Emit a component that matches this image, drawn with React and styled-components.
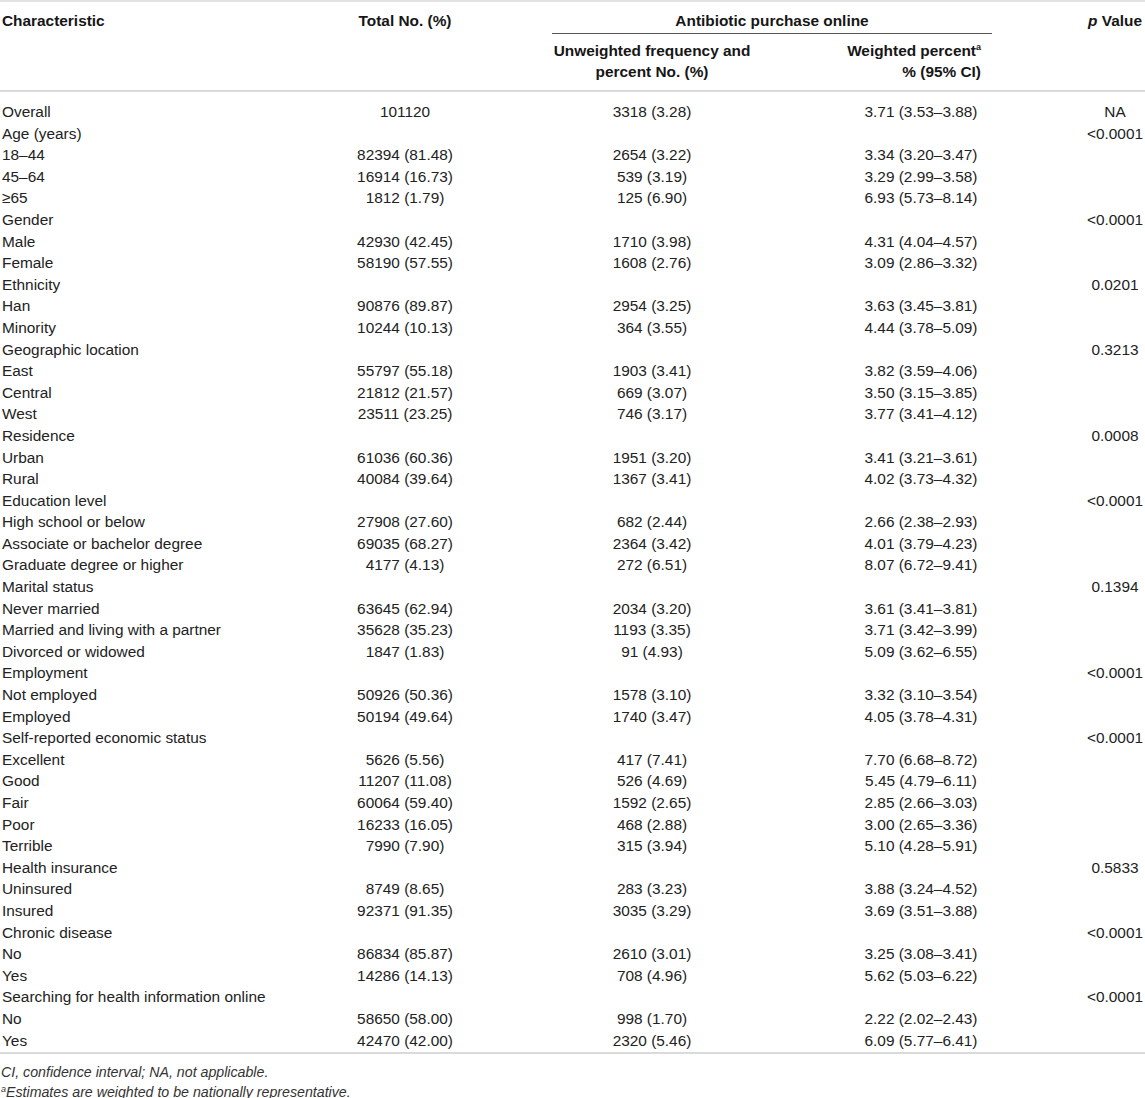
import styled, { createGlobalStyle } from "styled-components";

const GlobalStyle = createGlobalStyle`
  html, body {
    margin: 0;
    padding: 0;
    background: #fff;
    overflow: hidden;
  }
  body {
    font-family: "Liberation Sans", Arial, Helvetica, sans-serif;
    color: #222;
  }
`;

const COLUMNS = "300px 210px 284px 254px 134px";

const TableWrap = styled.div`
  width: 1182px;
  font-size: 15.4px;
`;

const Head = styled.div`
  display: grid;
  grid-template-columns: ${COLUMNS};
  grid-template-rows: auto auto;
  border-top: 2px solid #e2e2e2;
  border-bottom: 2px solid #dadada;
  padding: 8px 0 8px;
  line-height: 21px;
  font-weight: 700;
  color: #161616;
`;

const HeadCell = styled.div`
  grid-column: ${(p) => p.col};
  grid-row: ${(p) => p.row || "1 / 3"};
  text-align: ${(p) => p.align || "center"};
  padding-left: ${(p) => p.pl || 0}px;
  padding-right: ${(p) => p.pr || 0}px;
`;

const GroupHead = styled.div`
  grid-column: 3 / 5;
  grid-row: 1;
  margin: 0 56px 0 42px;
  padding-bottom: 2px;
  border-bottom: 1px solid #555;
  text-align: center;
`;

const SubHead = styled.div`
  grid-column: ${(p) => p.col};
  grid-row: 2;
  margin-top: 6px;
  text-align: ${(p) => p.align || "center"};
  padding-right: ${(p) => p.pr || 0}px;
`;

const Italic = styled.span`
  font-style: italic;
`;

const Sup = styled.sup`
  font-size: 9px;
  line-height: 0;
  vertical-align: 6px;
`;

const Body = styled.div`
  padding: 9px 0 1px;
  border-bottom: 2px solid #dadada;
`;

const Row = styled.div`
  display: grid;
  grid-template-columns: ${COLUMNS};
  line-height: 21.6px;
  height: 21.6px;
  white-space: nowrap;
`;

const Cell = styled.div`
  text-align: ${(p) => (p.$left ? "left" : "center")};
  padding-left: ${(p) => (p.$left ? 2 : 0)}px;
`;

const Notes = styled.div`
  padding-top: 8px;
  font-size: 14.2px;
  line-height: 20px;
  font-style: italic;
  color: #333;
  padding-left: 1px;
`;

const NoteSup = styled.sup`
  font-size: 9px;
  line-height: 0;
  vertical-align: 5px;
`;

const rows = [
  ["Overall", "101120", "3318 (3.28)", "3.71 (3.53–3.88)", "NA"],
  ["Age (years)", "", "", "", "<0.0001"],
  ["18–44", "82394 (81.48)", "2654 (3.22)", "3.34 (3.20–3.47)", ""],
  ["45–64", "16914 (16.73)", "539 (3.19)", "3.29 (2.99–3.58)", ""],
  ["≥65", "1812 (1.79)", "125 (6.90)", "6.93 (5.73–8.14)", ""],
  ["Gender", "", "", "", "<0.0001"],
  ["Male", "42930 (42.45)", "1710 (3.98)", "4.31 (4.04–4.57)", ""],
  ["Female", "58190 (57.55)", "1608 (2.76)", "3.09 (2.86–3.32)", ""],
  ["Ethnicity", "", "", "", "0.0201"],
  ["Han", "90876 (89.87)", "2954 (3.25)", "3.63 (3.45–3.81)", ""],
  ["Minority", "10244 (10.13)", "364 (3.55)", "4.44 (3.78–5.09)", ""],
  ["Geographic location", "", "", "", "0.3213"],
  ["East", "55797 (55.18)", "1903 (3.41)", "3.82 (3.59–4.06)", ""],
  ["Central", "21812 (21.57)", "669 (3.07)", "3.50 (3.15–3.85)", ""],
  ["West", "23511 (23.25)", "746 (3.17)", "3.77 (3.41–4.12)", ""],
  ["Residence", "", "", "", "0.0008"],
  ["Urban", "61036 (60.36)", "1951 (3.20)", "3.41 (3.21–3.61)", ""],
  ["Rural", "40084 (39.64)", "1367 (3.41)", "4.02 (3.73–4.32)", ""],
  ["Education level", "", "", "", "<0.0001"],
  ["High school or below", "27908 (27.60)", "682 (2.44)", "2.66 (2.38–2.93)", ""],
  ["Associate or bachelor degree", "69035 (68.27)", "2364 (3.42)", "4.01 (3.79–4.23)", ""],
  ["Graduate degree or higher", "4177 (4.13)", "272 (6.51)", "8.07 (6.72–9.41)", ""],
  ["Marital status", "", "", "", "0.1394"],
  ["Never married", "63645 (62.94)", "2034 (3.20)", "3.61 (3.41–3.81)", ""],
  ["Married and living with a partner", "35628 (35.23)", "1193 (3.35)", "3.71 (3.42–3.99)", ""],
  ["Divorced or widowed", "1847 (1.83)", "91 (4.93)", "5.09 (3.62–6.55)", ""],
  ["Employment", "", "", "", "<0.0001"],
  ["Not employed", "50926 (50.36)", "1578 (3.10)", "3.32 (3.10–3.54)", ""],
  ["Employed", "50194 (49.64)", "1740 (3.47)", "4.05 (3.78–4.31)", ""],
  ["Self-reported economic status", "", "", "", "<0.0001"],
  ["Excellent", "5626 (5.56)", "417 (7.41)", "7.70 (6.68–8.72)", ""],
  ["Good", "11207 (11.08)", "526 (4.69)", "5.45 (4.79–6.11)", ""],
  ["Fair", "60064 (59.40)", "1592 (2.65)", "2.85 (2.66–3.03)", ""],
  ["Poor", "16233 (16.05)", "468 (2.88)", "3.00 (2.65–3.36)", ""],
  ["Terrible", "7990 (7.90)", "315 (3.94)", "5.10 (4.28–5.91)", ""],
  ["Health insurance", "", "", "", "0.5833"],
  ["Uninsured", "8749 (8.65)", "283 (3.23)", "3.88 (3.24–4.52)", ""],
  ["Insured", "92371 (91.35)", "3035 (3.29)", "3.69 (3.51–3.88)", ""],
  ["Chronic disease", "", "", "", "<0.0001"],
  ["No", "86834 (85.87)", "2610 (3.01)", "3.25 (3.08–3.41)", ""],
  ["Yes", "14286 (14.13)", "708 (4.96)", "5.62 (5.03–6.22)", ""],
  ["Searching for health information online", "", "", "", "<0.0001"],
  ["No", "58650 (58.00)", "998 (1.70)", "2.22 (2.02–2.43)", ""],
  ["Yes", "42470 (42.00)", "2320 (5.46)", "6.09 (5.77–6.41)", ""],
];

export default function App() {
  return (
    <>
      <GlobalStyle />
      <TableWrap>
        <Head>
          <HeadCell col="1" align="left" pl={2}>Characteristic</HeadCell>
          <HeadCell col="2">Total No. (%)</HeadCell>
          <GroupHead>Antibiotic purchase online</GroupHead>
          <SubHead col="3">
            Unweighted frequency and
            <br />
            percent No. (%)
          </SubHead>
          <SubHead col="4" align="right" pr={67}>
            Weighted percent<Sup>a</Sup>
            <br />
            % (95% CI)
          </SubHead>
          <HeadCell col="5">
            <Italic>p</Italic> Value
          </HeadCell>
        </Head>
        <Body>
          {rows.map((r, i) => (
            <Row key={i}>
              <Cell $left>{r[0]}</Cell>
              <Cell>{r[1]}</Cell>
              <Cell>{r[2]}</Cell>
              <Cell>{r[3]}</Cell>
              <Cell>{r[4]}</Cell>
            </Row>
          ))}
        </Body>
        <Notes>
          <div>CI, confidence interval; NA, not applicable.</div>
          <div>
            <NoteSup>a</NoteSup>Estimates are weighted to be nationally representative.
          </div>
        </Notes>
      </TableWrap>
    </>
  );
}
